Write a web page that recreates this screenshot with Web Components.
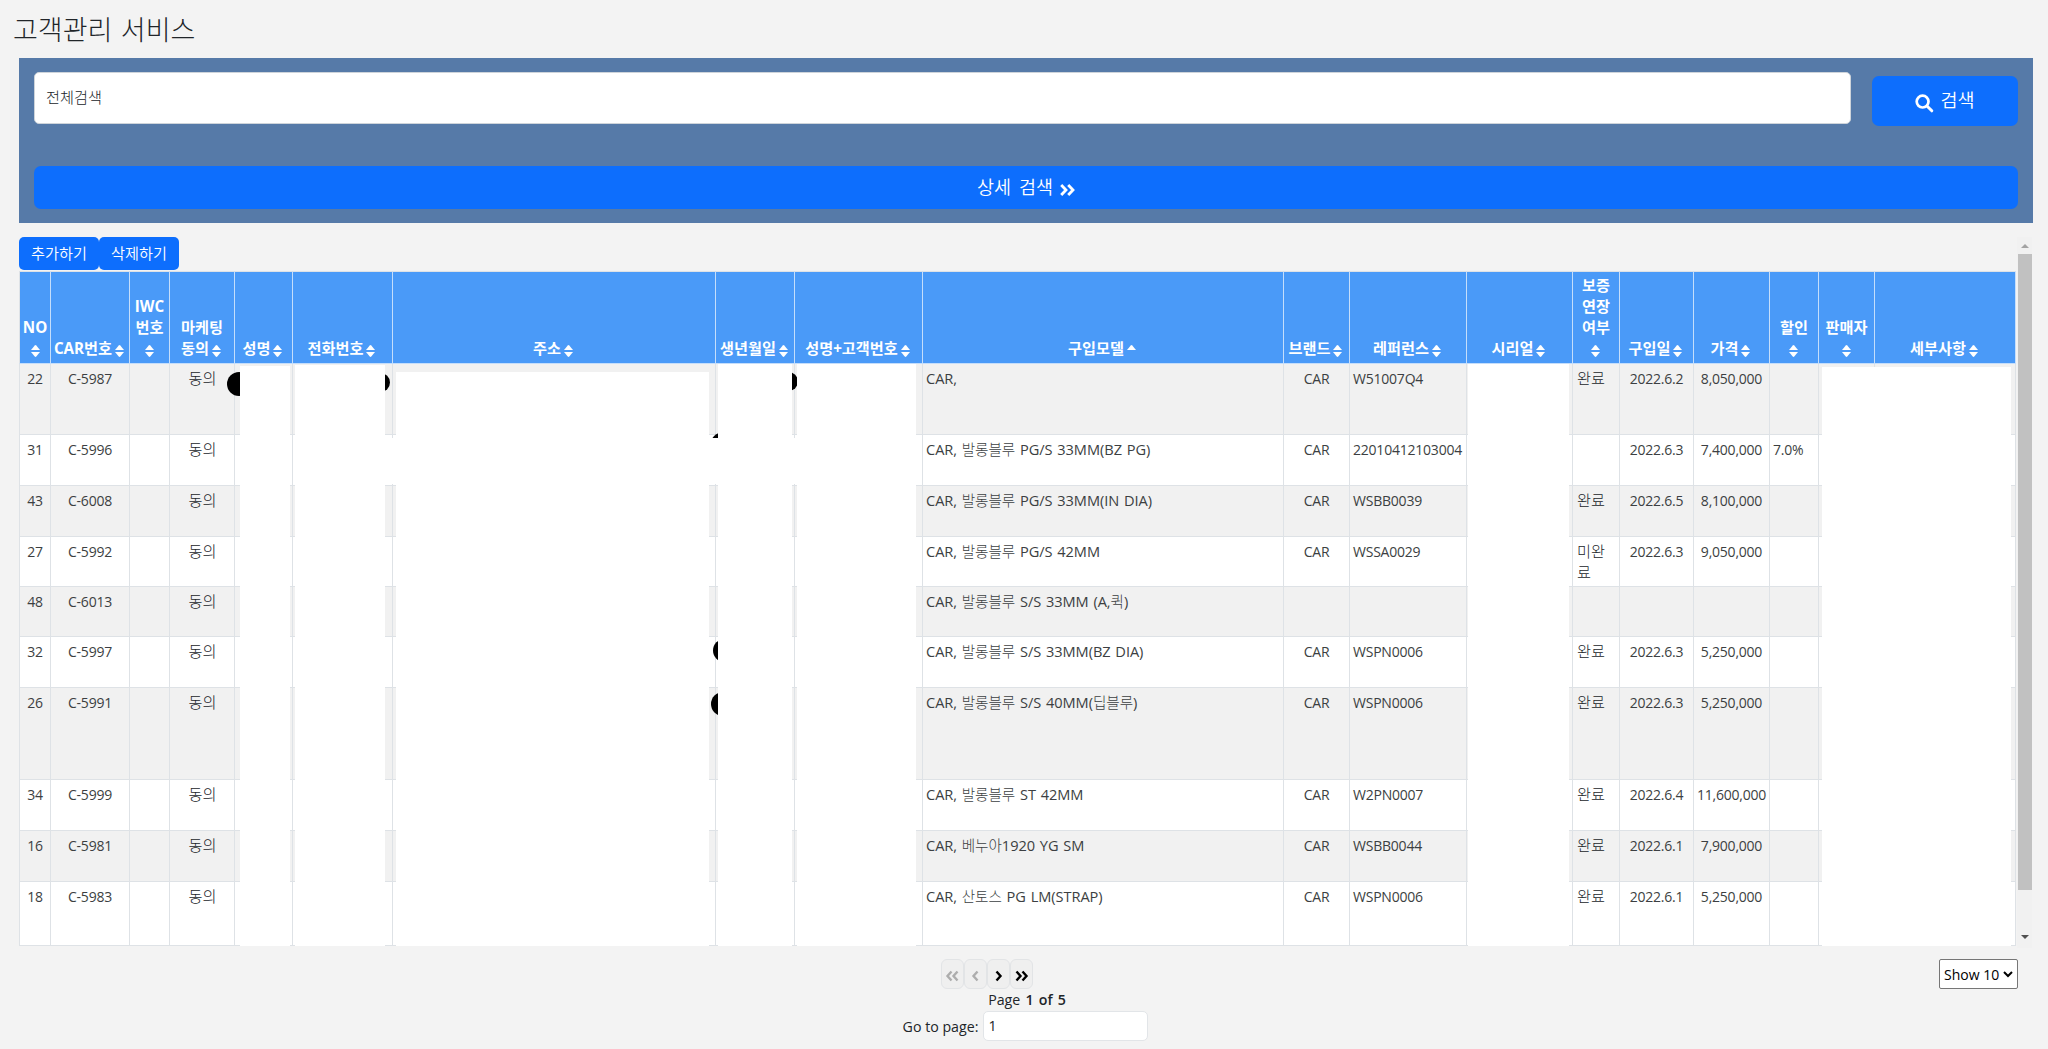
<!DOCTYPE html>
<html lang="ko">
<head>
<meta charset="utf-8">
<title>고객관리 서비스</title>
<style>
    body {
        margin: 0;
        height: 1049px;
        overflow: hidden;
        background-color: #f3f3f3;
        color: #212529;
        font-family: "Open Sans", "Noto Sans CJK KR Light", "Noto Sans CJK KR", sans-serif;
        font-size: 14px;
        font-weight: 400;
    }
</style>
</head>
<body>
<customer-app></customer-app>
<script>
// Crea un shadow root obert amb la plantilla donada
function attachTemplate(host, html) {
    const template = document.createElement('template');
    template.innerHTML = html;
    const shadow = host.attachShadow({ mode: 'open' });
    shadow.appendChild(template.content.cloneNode(true));
    return shadow;
}

const CHEVRONS = {
    first: '<path d="M6.5 1.5 2.5 6l4 4.5M12.5 1.5 8.5 6l4 4.5"/>',
    prev: '<path d="M9.5 1.5 5.5 6l4 4.5"/>',
    next: '<path d="M5.5 1.5 9.5 6l-4 4.5"/>',
    last: '<path d="M2.5 1.5 6.5 6l-4 4.5M8.5 1.5 12.5 6l-4 4.5"/>'
};

class UiButton extends HTMLElement {
    constructor() {
        super();
        attachTemplate(this, `
            <style>
                :host {
                    display: flex;
                    align-items: center;
                    justify-content: center;
                    box-sizing: border-box;
                    background-color: #0d6efd;
                    color: #fff;
                    border-radius: 7px;
                    font-family: "Open Sans", "Noto Sans CJK KR", sans-serif;
                    font-size: 18.5px;
                    font-weight: 350;
                    white-space: nowrap;
                }
                :host([small]) {
                    width: 80px;
                    height: 33px;
                    padding-bottom: 4px;
                    border-radius: 5px;
                    font-size: 15.2px;
                }
            </style>
            <slot></slot>
        `);
    }
}

class SearchPanel extends HTMLElement {
    constructor() {
        super();
        attachTemplate(this, `
            <style>
                :host {
                    display: block;
                    box-sizing: border-box;
                    height: 165px;
                    padding: 14px 15px 0;
                    background-color: #567aa8;
                }
                .row {
                    display: flex;
                    align-items: flex-start;
                    gap: 21px;
                }
                .input {
                    flex: 1;
                    box-sizing: border-box;
                    height: 52px;
                    padding-left: 11px;
                    line-height: 49px;
                    background-color: #fff;
                    border: 1px solid #ced4da;
                    border-radius: 5px;
                    font-size: 15.2px;
                    font-weight: 300;
                }
                .search {
                    width: 146px;
                    height: 50px;
                    margin-top: 4px;
                    gap: 6px;
                }
                .detail {
                    height: 43px;
                    margin-top: 40px;
                    gap: 7px;
                }
                svg {
                    position: relative;
                    top: 2px;
                }
                .label {
                    position: relative;
                    top: -2px;
                    word-spacing: 3px;
                }
            </style>
            <div class="row">
                <div class="input">전체검색</div>
                <ui-button class="search">
                    <svg width="19" height="19" viewBox="0 0 19 19" fill="none" stroke="#fff" stroke-linecap="round">
                        <circle cx="7.6" cy="7.6" r="5.9" stroke-width="2.7"/>
                        <path d="M12.2 12.2 16.8 16.8" stroke-width="3"/>
                    </svg>
                    <span class="label">검색</span>
                </ui-button>
            </div>
            <ui-button class="detail">
                <span class="label">상세 검색</span>
                <svg width="15" height="12" viewBox="0 0 15 12" fill="none" stroke="#fff" stroke-width="2.8">
                    <path d="M1.2 1 6 6 1.2 11M8.2 1 13 6 8.2 11"/>
                </svg>
            </ui-button>
        `);
    }
}

class SortIcon extends HTMLElement {
    constructor() {
        super();
        const down = this.hasAttribute('asc') ? '' : '<path d="M0 7h8.4L4.9 11.6q-.7.7-1.4 0z"/>';
        attachTemplate(this, `
            <style>
                :host {
                    display: inline-block;
                    width: 9px;
                    height: 12px;
                    vertical-align: -3px;
                }
                :host([inline]) { margin: 0 2px 0 3px; }
                svg { display: block; }
            </style>
            <svg width="9" height="12" viewBox="0 0 8.4 12" preserveAspectRatio="none" fill="#fff">
                <path d="M0 5h8.4L4.9.4q-.7-.7-1.4 0z"/>${down}
            </svg>
        `);
    }
}

const COLUMNS = [
    { title: 'NO<br>', width: 32 },
    { title: 'CAR번호', width: 79 },
    { title: 'IWC<br>번호<br>', width: 40 },
    { title: '마케팅<br>동의', width: 65, korean: true },
    { title: '성명', width: 58 },
    { title: '전화번호', width: 100 },
    { title: '주소', width: 323 },
    { title: '생년월일', width: 79 },
    { title: '성명+고객번호', width: 128 },
    { title: '구입모델', width: 361, align: 'left', model: true, asc: true },
    { title: '브랜드', width: 66 },
    { title: '레퍼런스', width: 117, align: 'left' },
    { title: '시리얼', width: 106 },
    { title: '보증<br>연장<br>여부<br>', width: 47, align: 'left', korean: true },
    { title: '구입일', width: 74 },
    { title: '가격', width: 76 },
    { title: '할인<br>', width: 49, align: 'left' },
    { title: '판매자<br>', width: 56 },
    { title: '세부사항', width: 141 }
];

// no, car, consentiment, model, marca, referència, garantia, data, preu, descompte
const ROWS = [
    { h: 71, v: ['22', 'C-5987', '동의', 'CAR,', 'CAR', 'W51007Q4', '완료', '2022.6.2', '8,050,000', ''] },
    { h: 51, v: ['31', 'C-5996', '동의', 'CAR, 발롱블루 PG/S 33MM(BZ PG)', 'CAR', '22010412103004', '', '2022.6.3', '7,400,000', '7.0%'] },
    { h: 51, v: ['43', 'C-6008', '동의', 'CAR, 발롱블루 PG/S 33MM(IN DIA)', 'CAR', 'WSBB0039', '완료', '2022.6.5', '8,100,000', ''] },
    { h: 50, v: ['27', 'C-5992', '동의', 'CAR, 발롱블루 PG/S 42MM', 'CAR', 'WSSA0029', '미완<br>료', '2022.6.3', '9,050,000', ''] },
    { h: 50, v: ['48', 'C-6013', '동의', 'CAR, 발롱블루 S/S 33MM (A,퀵)', '', '', '', '', '', ''] },
    { h: 51, v: ['32', 'C-5997', '동의', 'CAR, 발롱블루 S/S 33MM(BZ DIA)', 'CAR', 'WSPN0006', '완료', '2022.6.3', '5,250,000', ''] },
    { h: 92, v: ['26', 'C-5991', '동의', 'CAR, 발롱블루 S/S 40MM(딥블루)', 'CAR', 'WSPN0006', '완료', '2022.6.3', '5,250,000', ''] },
    { h: 51, v: ['34', 'C-5999', '동의', 'CAR, 발롱블루 ST 42MM', 'CAR', 'W2PN0007', '완료', '2022.6.4', '11,600,000', ''] },
    { h: 51, v: ['16', 'C-5981', '동의', 'CAR, 베누아1920 YG SM', 'CAR', 'WSBB0044', '완료', '2022.6.1', '7,900,000', ''] },
    { h: 64, v: ['18', 'C-5983', '동의', 'CAR, 산토스 PG LM(STRAP)', 'CAR', 'WSPN0006', '완료', '2022.6.1', '5,250,000', ''] }
];
const FIELD_COLUMNS = [0, 1, 3, 9, 10, 11, 13, 14, 15, 16];

// Dades personals tapades: x, y, mida dels punts
const DOTS = [
    [208, 101, 24], [352, 102, 19], [760, 101, 19],
    [691, 161, 28], [694, 368, 23], [692, 421, 24]
];
// x, y, amplada, alçada
const MASKS = [
    [221, 95, 50, 580], [276, 94, 90, 581], [377, 101, 313, 574],
    [699, 93, 74, 582], [778, 93, 119, 582], [366, 167, 532, 46],
    [1449, 93, 101, 582], [1803, 96, 189, 579]
];

class CustomerTable extends HTMLElement {
    constructor() {
        super();
        const tracks = COLUMNS.map(c => c.width + 'px').join(' ');
        const head = COLUMNS.map(c => {
            const inline = c.title.endsWith('<br>') ? '' : 'inline';
            return `<div class="th"><div>${c.title}<sort-icon ${inline} ${c.asc ? 'asc' : ''}></sort-icon></div></div>`;
        }).join('');
        const body = ROWS.map((row, i) => {
            const cells = COLUMNS.map((c, n) => {
                const field = FIELD_COLUMNS.indexOf(n);
                const text = field < 0 ? '' : row.v[field];
                const names = ['td', c.align || '', c.korean ? 'korean' : '', c.model ? 'model' : ''];
                return `<div class="${names.join(' ')}">${text}</div>`;
            }).join('');
            return `<div class="tr ${i % 2 ? '' : 'odd'}" style="height:${row.h}px">${cells}</div>`;
        }).join('');
        const dots = DOTS.map(([x, y, s]) =>
            `<i class="dot" style="left:${x}px;top:${y}px;width:${s}px;height:${s}px"></i>`
        ).join('');
        const masks = MASKS.map(([x, y, w, h]) =>
            `<i class="mask" style="left:${x}px;top:${y}px;width:${w}px;height:${h}px"></i>`
        ).join('');

        attachTemplate(this, `
            <style>
                :host {
                    display: block;
                    position: relative;
                    width: 1997px;
                    height: 675px;
                    overflow: hidden;
                }
                .thead, .tr {
                    display: grid;
                    grid-template-columns: ${tracks};
                }
                .thead {
                    height: 93px;
                    background-color: #4a9af8;
                    color: #fff;
                    font-family: "Open Sans", "Noto Sans CJK KR", sans-serif;
                    font-weight: 700;
                    font-size: 15.2px;
                }
                .th, .td {
                    box-sizing: border-box;
                    border-right: 1px solid #dee2e6;
                    border-bottom: 1px solid #dee2e6;
                    text-align: center;
                    white-space: nowrap;
                    line-height: 21px;
                }
                .th {
                    display: flex;
                    align-items: flex-end;
                    justify-content: center;
                    padding-bottom: 4px;
                    border-color: #c5defb;
                    border-top: 1px solid #dee2e6;
                }
                .tr { background-color: #fff; }
                .odd { background-color: #f1f1f1; }
                .td {
                    padding: 4px 3px 0;
                    overflow: hidden;
                    color: #3c3f42;
                    letter-spacing: -.22px;
                }
                .th:first-child, .td:first-child { border-left: 1px solid #dee2e6; }
                .left { text-align: left; }
                .korean {
                    font-size: 15.2px;
                    font-weight: 300;
                    color: #212529;
                    padding-left: 4px;
                    letter-spacing: 0;
                }
                .model {
                    font-size: 14.6px;
                    letter-spacing: -.05px;
                    word-spacing: 1px;
                }
                .dot, .mask { position: absolute; }
                .dot { border-radius: 50%; background-color: #000; }
                .mask { background-color: #fff; }
            </style>
            <div class="thead">${head}</div>
            ${body}
            ${dots}${masks}
        `);
    }
}

class ScrollTrack extends HTMLElement {
    constructor() {
        super();
        attachTemplate(this, `
            <style>
                :host {
                    display: flex;
                    flex-direction: column;
                    align-items: center;
                    width: 15px;
                    height: 711px;
                    background-color: #f1f1f1;
                }
                .arrow {
                    display: flex;
                    align-items: center;
                    height: 17px;
                }
                .thumb {
                    width: 14px;
                    height: 636px;
                    margin-bottom: 38px;
                    background-color: #c1c1c1;
                }
            </style>
            <div class="arrow"><svg width="8" height="4"><path d="M0 4 4 0l4 4z" fill="#a3a3a3"/></svg></div>
            <div class="thumb"></div>
            <div class="arrow"><svg width="8" height="4"><path d="M0 0h8L4 4z" fill="#505050"/></svg></div>
        `);
    }
}

class PageNav extends HTMLElement {
    constructor() {
        super();
        const buttons = Object.keys(CHEVRONS).map(key => `
            <div class="btn ${key}">
                <svg width="15" height="12" viewBox="0 0 15 12" fill="none" stroke="currentColor" stroke-width="2.4">${CHEVRONS[key]}</svg>
            </div>`).join('');
        attachTemplate(this, `
            <style>
                :host {
                    display: grid;
                    grid-template-columns: 1fr auto 1fr;
                    align-items: start;
                    font-size: 14.2px;
                }
                .center {
                    grid-column: 2;
                    display: flex;
                    flex-direction: column;
                    align-items: center;
                }
                .buttons {
                    display: flex;
                    margin-right: 78px;
                }
                .btn {
                    display: flex;
                    align-items: center;
                    justify-content: center;
                    box-sizing: border-box;
                    width: 23px;
                    height: 30px;
                    padding-top: 4px;
                    background-color: #efefef;
                    border: 1px solid #e2e4e6;
                    border-radius: 6px;
                    color: #000;
                }
                .first, .prev { color: #adadad; }
                .count {
                    padding-left: 3px;
                    line-height: 22px;
                    word-spacing: 1.5px;
                }
                .count b { font-weight: 600; }
                .goto {
                    display: flex;
                    align-items: center;
                    gap: 5px;
                    height: 30px;
                }
                .page {
                    box-sizing: border-box;
                    width: 165px;
                    height: 30px;
                    padding-left: 4px;
                    line-height: 28px;
                    background-color: #fff;
                    border: 1px solid #e2e5e8;
                    border-radius: 5px;
                }
                .size {
                    grid-column: 3;
                    justify-self: end;
                    display: flex;
                    align-items: center;
                    gap: 4px;
                    box-sizing: border-box;
                    width: 79px;
                    height: 30px;
                    padding-left: 4px;
                    border: 1px solid #767676;
                    border-radius: 2px;
                    background-color: #fff;
                    color: #000;
                    font-size: 14px;
                    white-space: nowrap;
                }
            </style>
            <div class="center">
                <div class="buttons">${buttons}</div>
                <div class="count">Page <b>1 of 5</b></div>
                <div class="goto"><span>Go to page:</span><div class="page">1</div></div>
            </div>
            <div class="size"><span>Show 10</span>
                <svg width="10" height="7" viewBox="0 0 10 7" fill="none" stroke="#000" stroke-width="2"><path d="M1 1l4 4 4-4"/></svg>
            </div>
        `);
    }
}

class CustomerApp extends HTMLElement {
    constructor() {
        super();
        attachTemplate(this, `
            <style>
                :host { display: block; }
                h1 {
                    box-sizing: border-box;
                    height: 58px;
                    margin: 0;
                    padding: 10px 0 0 13px;
                    font-size: 27px;
                    font-weight: 300;
                    line-height: 40px;
                    word-spacing: 1.5px;
                }
                search-panel { margin: 0 15px 0 19px; }
                .list {
                    display: flex;
                    gap: 1px;
                    margin: 14px 0 0 19px;
                }
                .toolbar {
                    display: flex;
                    height: 34px;
                }
                page-nav { margin: 11px 30px 0 33px; }
            </style>
            <h1>고객관리 서비스</h1>
            <search-panel></search-panel>
            <div class="list">
                <div>
                    <div class="toolbar">
                        <ui-button small>추가하기</ui-button>
                        <ui-button small>삭제하기</ui-button>
                    </div>
                    <customer-table></customer-table>
                </div>
                <scroll-track></scroll-track>
            </div>
            <page-nav></page-nav>
        `);
    }
}

customElements.define('ui-button', UiButton);
customElements.define('search-panel', SearchPanel);
customElements.define('sort-icon', SortIcon);
customElements.define('customer-table', CustomerTable);
customElements.define('scroll-track', ScrollTrack);
customElements.define('page-nav', PageNav);
customElements.define('customer-app', CustomerApp);
</script>
</body>
</html>
